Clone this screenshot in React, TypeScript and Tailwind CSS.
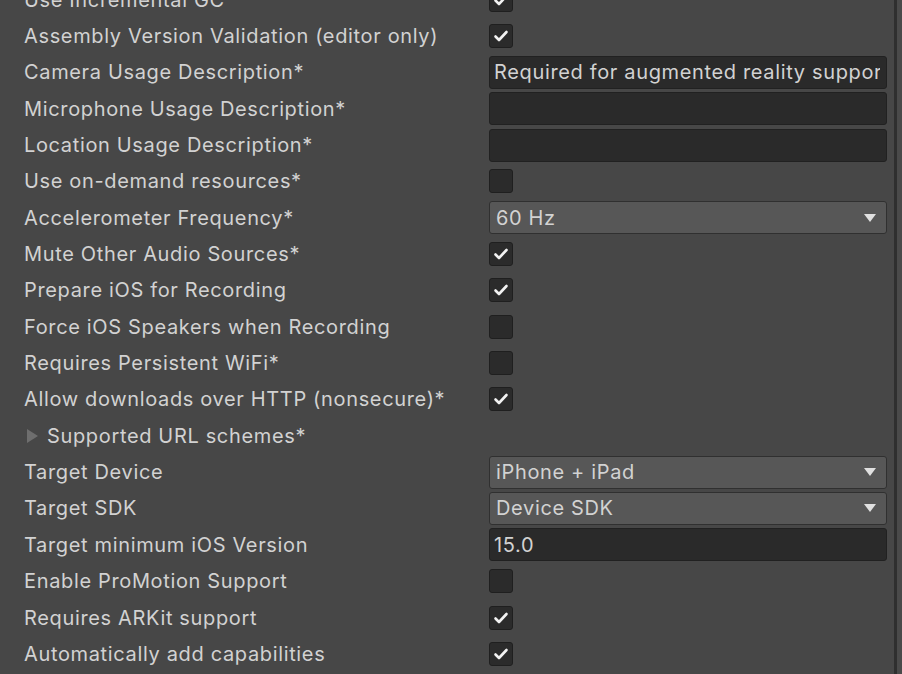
type Row =
  | { label: string; kind: "check"; checked: boolean }
  | { label: string; kind: "text"; value: string }
  | { label: string; kind: "select"; value: string }
  | { label: string; kind: "foldout" };

const rows: Row[] = [
  { label: "Use Incremental GC", kind: "check", checked: true },
  { label: "Assembly Version Validation (editor only)", kind: "check", checked: true },
  { label: "Camera Usage Description*", kind: "text", value: "Required for augmented reality support" },
  { label: "Microphone Usage Description*", kind: "text", value: "" },
  { label: "Location Usage Description*", kind: "text", value: "" },
  { label: "Use on-demand resources*", kind: "check", checked: false },
  { label: "Accelerometer Frequency*", kind: "select", value: "60 Hz" },
  { label: "Mute Other Audio Sources*", kind: "check", checked: true },
  { label: "Prepare iOS for Recording", kind: "check", checked: true },
  { label: "Force iOS Speakers when Recording", kind: "check", checked: false },
  { label: "Requires Persistent WiFi*", kind: "check", checked: false },
  { label: "Allow downloads over HTTP (nonsecure)*", kind: "check", checked: true },
  { label: "Supported URL schemes*", kind: "foldout" },
  { label: "Target Device", kind: "select", value: "iPhone + iPad" },
  { label: "Target SDK", kind: "select", value: "Device SDK" },
  { label: "Target minimum iOS Version", kind: "text", value: "15.0" },
  { label: "Enable ProMotion Support", kind: "check", checked: false },
  { label: "Requires ARKit support", kind: "check", checked: true },
  { label: "Automatically add capabilities", kind: "check", checked: true },
];

const Checkbox = ({ checked }: { checked: boolean }) => (
  <div className="w-[24px] h-[24px] rounded-[3px] bg-[#2b2b2b] border border-[#1f1f1f] flex items-center justify-center">
    {checked && (
      <svg width="16" height="14" viewBox="0 0 16 14">
        <path d="M2.5 7.5 L6 11 L13.5 3" fill="none" stroke="#f2f2f2" strokeWidth="2.6" strokeLinecap="round" strokeLinejoin="round" />
      </svg>
    )}
  </div>
);

const Field = ({ row }: { row: Row }) => {
  if (row.kind === "check") return <Checkbox checked={row.checked} />;
  if (row.kind === "text")
    return (
      <div className="w-[398px] h-[33px] rounded-[3px] bg-[#2a2a2a] border border-[#212121] flex items-center pl-[4px] pr-[6px]">
        {/* clip value inside the padding like the editor does */}
        <span className="flex-1 overflow-hidden whitespace-nowrap">{row.value}</span>
      </div>
    );
  if (row.kind === "select")
    return (
      <div className="w-[398px] h-[33px] rounded-[3px] bg-[#575757] border border-[#303030] flex items-center justify-between pl-[6px] pr-[10px]">
        <span>{row.value}</span>
        <svg width="12" height="8" viewBox="0 0 12 8">
          <path d="M0 0 H12 L6 8 Z" fill="#e0e0e0" />
        </svg>
      </div>
    );
  return null;
};

const App = () => {
  return (
    <div className="w-[902px] h-[674px] bg-[#474747] overflow-hidden flex text-[#d2d2d2] text-[20px] tracking-[0.65px] font-['Inter','Noto_Sans',sans-serif]">
      {/* inspector rows */}
      <div className="flex-1 flex flex-col -mt-[18.5px]">
        {rows.map((row) => (
          <div key={row.label} className="h-[36.35px] flex items-center shrink-0">
            <div className="w-[489px] pl-[24px] flex items-center whitespace-nowrap">
              {row.kind === "foldout" && (
                <svg width="12" height="14" viewBox="0 0 12 14" className="ml-[3px] mr-[8px]">
                  <path d="M0 0 L11 7 L0 14 Z" fill="#6e6e6e" />
                </svg>
              )}
              {row.label}
            </div>
            <Field row={row} />
          </div>
        ))}
      </div>
      {/* scrollbar edge */}
      <div className="w-[8px] h-full border-l-[3px] border-[#2f2f2f] bg-[#4a4a4a]" />
    </div>
  );
};

export default App;
